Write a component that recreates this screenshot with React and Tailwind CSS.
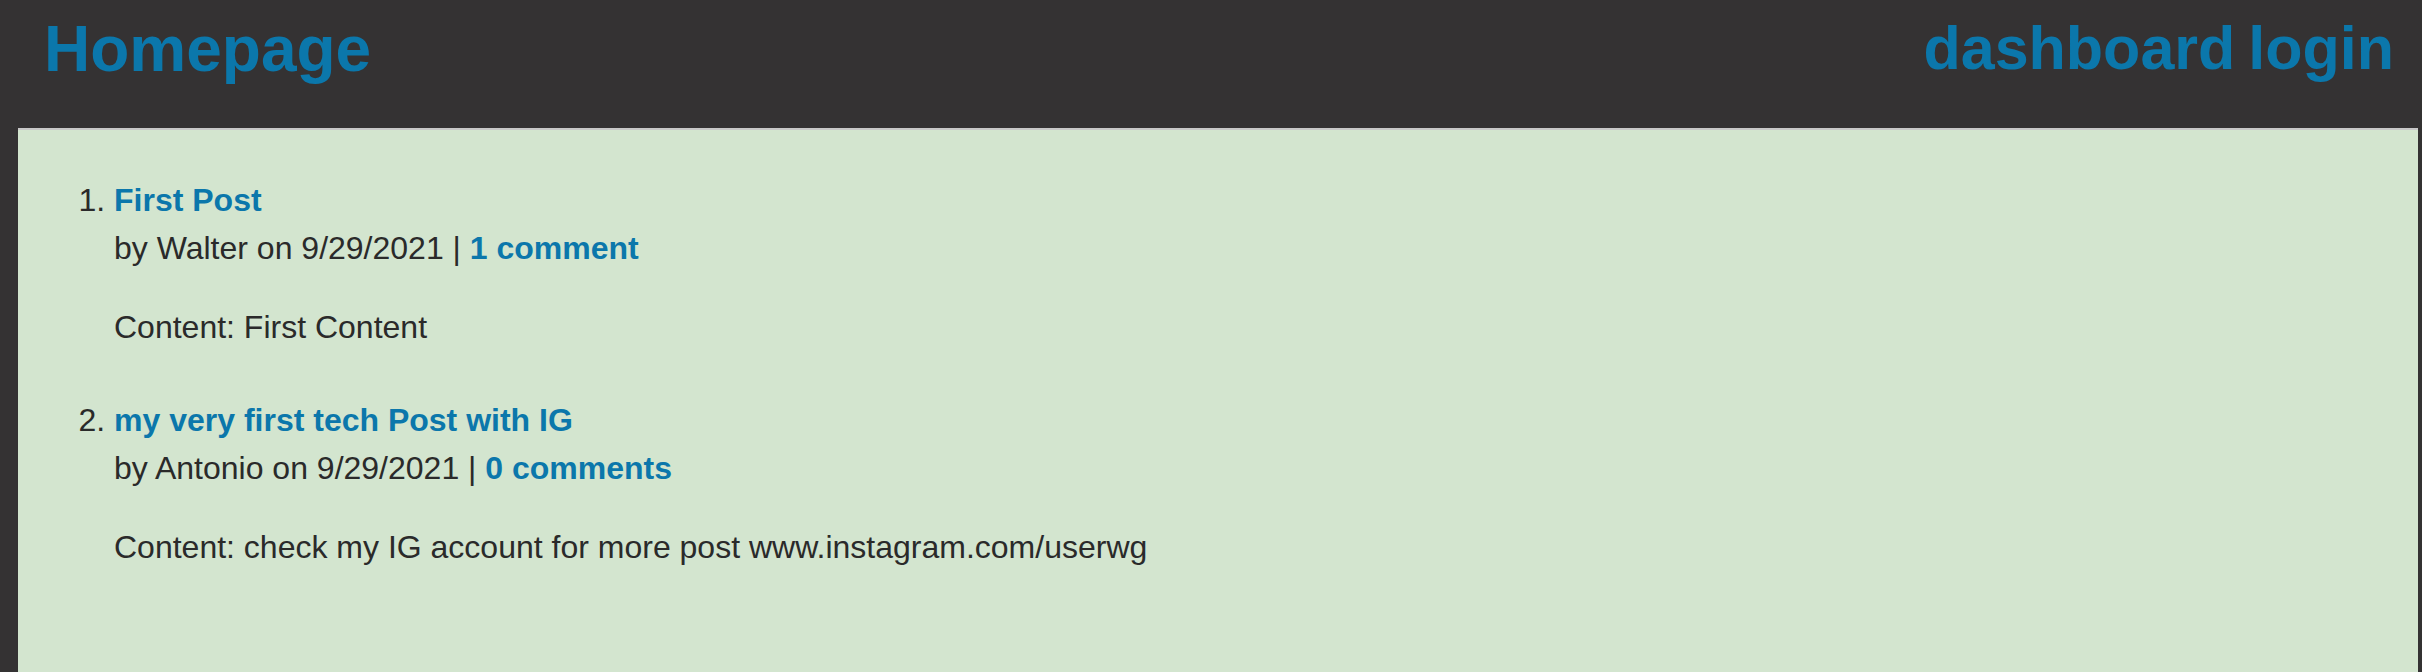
export default function App() {
    const posts = [
        { title: 'First Post', author: 'Walter', date: '9/29/2021', comments: '1 comment', content: 'First Content' },
        { title: 'my very first tech Post with IG', author: 'Antonio', date: '9/29/2021', comments: '0 comments', content: 'check my IG account for more post www.instagram.com/userwg' },
    ];

    return (
        <div className="min-h-screen flex flex-col bg-[#343233] font-['Liberation_Sans',Arial,sans-serif] text-[#2a2a2a]">
            <header className="h-[128px] flex justify-between items-start pl-[44px] pr-[28px]">
                <a href="#" className="mt-[12px] text-[64px] leading-[normal] font-bold text-[#0b77ab]">Homepage</a>
                <nav className="mt-[13px] flex gap-[13px] text-[61px] leading-[normal] font-bold text-[#0b77ab]">
                    <a href="#">dashboard</a>
                    <a href="#">login</a>
                </nav>
            </header>

            <main className="flex-1 ml-[18px] mr-[4px] bg-[#d3e5cf] border-t-2 border-[#c8c8c8] px-[16px] pt-[14px]">
                <ol className="list-decimal pl-[80px] mt-[32px] text-[32px] leading-[48px]">
                    {posts.map((post, idx) => (
                        <li key={idx} className="mb-[45px]">
                            <a href="#" className="font-bold text-[#0b77ab]">{post.title}</a>
                            <div>
                                by {post.author} on {post.date} | <a href="#" className="font-bold text-[#0b77ab]">{post.comments}</a>
                            </div>
                            <p className="mt-[31px]">Content: {post.content}</p>
                        </li>
                    ))}
                </ol>
            </main>
        </div>
    );
}
